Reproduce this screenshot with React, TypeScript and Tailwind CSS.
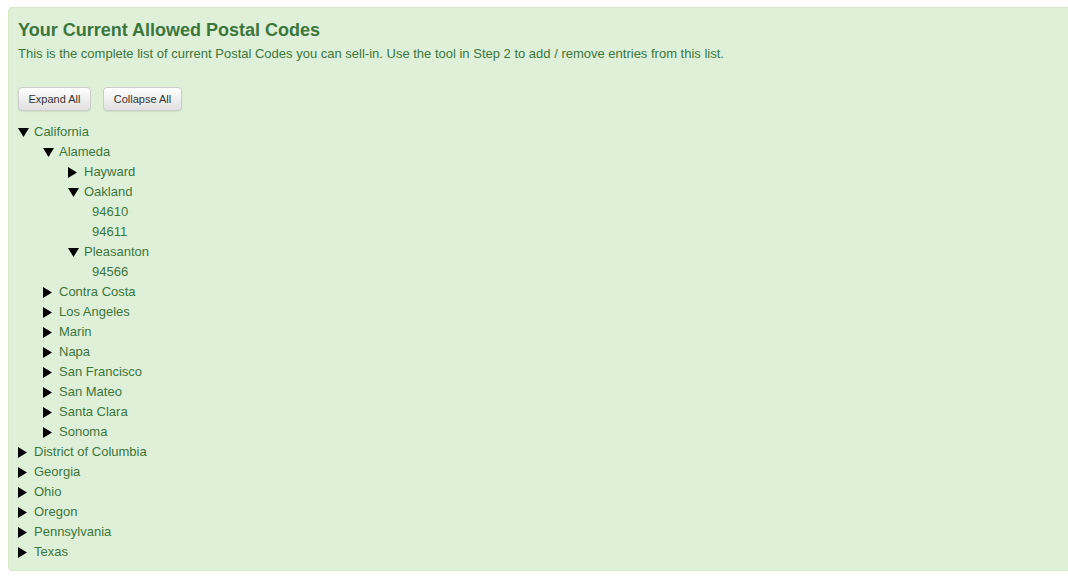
import React from 'react'

type Node = {
    label: string
    open?: boolean
    leaf?: boolean
    children?: Node[]
}

const tree: Node[] = [
    {
        label: 'California',
        open: true,
        children: [
            {
                label: 'Alameda',
                open: true,
                children: [
                    { label: 'Hayward' },
                    {
                        label: 'Oakland',
                        open: true,
                        children: [
                            { label: '94610', leaf: true },
                            { label: '94611', leaf: true },
                        ],
                    },
                    {
                        label: 'Pleasanton',
                        open: true,
                        children: [{ label: '94566', leaf: true }],
                    },
                ],
            },
            { label: 'Contra Costa' },
            { label: 'Los Angeles' },
            { label: 'Marin' },
            { label: 'Napa' },
            { label: 'San Francisco' },
            { label: 'San Mateo' },
            { label: 'Santa Clara' },
            { label: 'Sonoma' },
        ],
    },
    { label: 'District of Columbia' },
    { label: 'Georgia' },
    { label: 'Ohio' },
    { label: 'Oregon' },
    { label: 'Pennsylvania' },
    { label: 'Texas' },
]

function Caret({ open }: { open?: boolean }) {
    return (
        <span className="w-[16px] h-[20px] flex items-center shrink-0">
            {open ? (
                <svg width="11" height="9" viewBox="0 0 11 9">
                    <polygon points="0,0 11,0 5.5,9" fill="#000" />
                </svg>
            ) : (
                <svg width="9" height="11" viewBox="0 0 9 11">
                    <polygon points="0,0 9,5.5 0,11" fill="#000" />
                </svg>
            )}
        </span>
    )
}

function TreeItem({ node }: { node: Node }) {
    return (
        <li>
            <div className="flex items-center h-[20px]">
                {!node.leaf && <Caret open={node.open} />}
                <span className={node.leaf ? '-ml-px' : ''}>{node.label}</span>
            </div>
            {node.open && node.children && (
                <ul className="pl-[25px]">
                    {node.children.map((c) => (
                        <TreeItem key={c.label} node={c} />
                    ))}
                </ul>
            )}
        </li>
    )
}

export default function App() {
    return (
        <div
            className="min-h-[576px] bg-white pt-[7px] pl-2 overflow-hidden"
            style={{ fontFamily: '"Liberation Sans", Arial, sans-serif' }}
        >
            <div className="-mr-2 bg-[#dff0d8] border border-[#d6e9c6] rounded text-[#3c763d] pt-[11px] pl-[9px] pb-[8px]">
                <h4 className="text-[18px] leading-[22px] font-bold">
                    Your Current Allowed Postal Codes
                </h4>
                <p className="text-[13px] leading-[18px] mt-[4px]">
                    This is the complete list of current Postal Codes you can
                    sell-in. Use the tool in Step 2 to add / remove entries
                    from this list.
                </p>
                <div className="flex gap-3 mt-[24px]">
                    <button className="h-[24px] w-[73px] text-[11px] text-[#333] rounded border border-[#ccc] bg-gradient-to-b from-white to-[#e0e0e0] shadow-[0_1px_1px_rgba(0,0,0,0.08)]">
                        Expand All
                    </button>
                    <button className="h-[24px] w-[79px] text-[11px] text-[#333] rounded border border-[#ccc] bg-gradient-to-b from-white to-[#e0e0e0] shadow-[0_1px_1px_rgba(0,0,0,0.08)]">
                        Collapse All
                    </button>
                </div>
                <ul className="mt-[11px] text-[13px] leading-[20px]">
                    {tree.map((n) => (
                        <TreeItem key={n.label} node={n} />
                    ))}
                </ul>
            </div>
        </div>
    )
}
